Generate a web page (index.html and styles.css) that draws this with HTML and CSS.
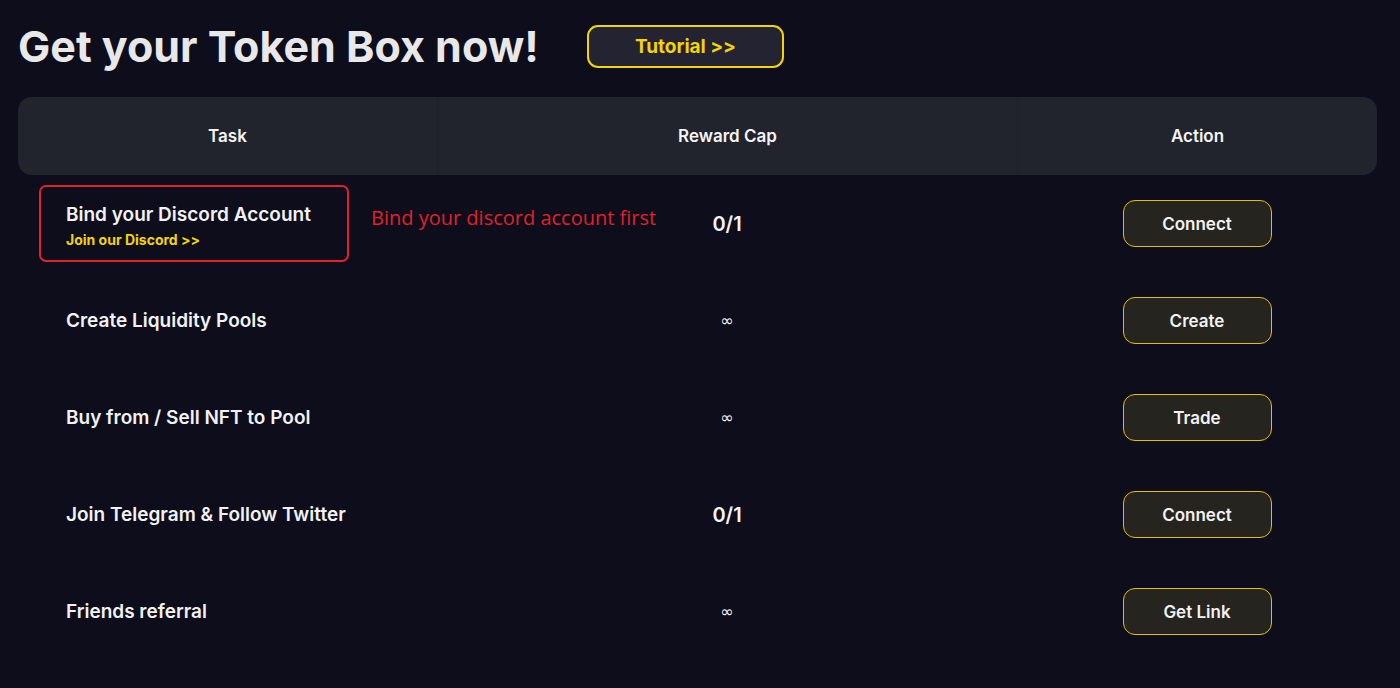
FILE: index.html
```html
<!DOCTYPE html>
<html lang="en">
<head>
<meta charset="utf-8">
<title>Get your Token Box now!</title>
<link rel="stylesheet" href="styles.css">
</head>
<body>
<div class="page">
  <div class="top">
    <h1 class="title">Get your Token Box now!</h1>
    <button class="tutorial">Tutorial &gt;&gt;</button>
  </div>
  <div class="table">
    <div class="head">
      <div class="hcell">Task</div>
      <div class="hcell">Reward Cap</div>
      <div class="hcell">Action</div>
    </div>
    <div class="row first">
      <div class="task">
        <div class="highlight">
          <div class="task-name">Bind your Discord Account</div>
          <div class="task-link">Join our Discord &gt;&gt;</div>
        </div>
        <div class="note">Bind your discord account first</div>
      </div>
      <div class="cap">0/1</div>
      <div class="action"><button class="btn">Connect</button></div>
    </div>
    <div class="row">
      <div class="task"><div class="task-name">Create Liquidity Pools</div></div>
      <div class="cap inf">∞</div>
      <div class="action"><button class="btn">Create</button></div>
    </div>
    <div class="row">
      <div class="task"><div class="task-name">Buy from / Sell NFT to Pool</div></div>
      <div class="cap inf">∞</div>
      <div class="action"><button class="btn">Trade</button></div>
    </div>
    <div class="row">
      <div class="task"><div class="task-name">Join Telegram &amp; Follow Twitter</div></div>
      <div class="cap">0/1</div>
      <div class="action"><button class="btn">Connect</button></div>
    </div>
    <div class="row">
      <div class="task"><div class="task-name">Friends referral</div></div>
      <div class="cap inf">∞</div>
      <div class="action"><button class="btn">Get Link</button></div>
    </div>
  </div>
</div>
</body>
</html>
```
FILE: styles.css
```css
* { box-sizing: border-box; }
html, body {
  margin: 0;
  padding: 0;
  background: #0d0d1b;
  height: 100%;
  overflow: hidden;
}
body {
  font-family: Inter, "Noto Sans", sans-serif;
  color: #f2f2f2;
}
.page {
  padding: 25px 23px 0 18px;
}
.top {
  display: flex;
  align-items: center;
  height: 42px;
  margin-bottom: 30px;
}
.title {
  margin: 0;
  font-family: Inter, sans-serif;
  font-size: 43px;
  font-weight: 700;
  color: #e8e8e8;
  width: 569px;
  line-height: 42px;
}
.tutorial {
  width: 197px;
  height: 43px;
  border: 2px solid #f3d500;
  border-radius: 11px;
  background: #232332;
  color: #f5d400;
  font-family: Inter, sans-serif;
  font-size: 19px;
  font-weight: 700;
  padding: 0;
}
.table {
  width: 1359px;
}
.head {
  display: grid;
  grid-template-columns: 419px 580px 360px;
  height: 78px;
  background: #21232d;
  border-radius: 14px;
}
.hcell {
  display: flex;
  align-items: center;
  justify-content: center;
  font-size: 17px;
  font-weight: 600;
  color: #f4f4f4;
}
.hcell + .hcell {
  border-left: 1px solid #1f212a;
}
.row {
  display: grid;
  grid-template-columns: 419px 580px 360px;
  height: 97px;
  align-items: center;
}
.task {
  position: relative;
  padding-left: 48px;
  height: 100%;
  display: flex;
  align-items: center;
}
.task-name {
  font-size: 19px;
  font-weight: 600;
  color: #f2f2f2;
}
.first .task {
  padding-left: 21px;
}
.highlight {
  width: 310px;
  height: 77px;
  border: 2px solid #e0222c;
  border-radius: 7px;
  padding: 16px 0 0 25px;
}
.task-link {
  margin-top: 5px;
  font-size: 14px;
  font-weight: 700;
  color: #f5d400;
}
.note {
  position: absolute;
  left: 353px;
  top: 29px;
  white-space: nowrap;
  font-family: "Open Sans", "Noto Sans", sans-serif;
  font-size: 20px;
  color: #e0202a;
}
.cap {
  text-align: center;
  font-size: 20px;
  font-weight: 600;
  color: #f4f4f4;
}
.cap.inf {
  font-size: 16px;
  font-weight: 400;
  font-family: "DejaVu Sans", sans-serif;
}
.action {
  display: flex;
  justify-content: center;
}
.btn {
  width: 149px;
  height: 47px;
  border: 1.5px solid #e3c000;
  border-radius: 12px;
  background: #26241e;
  color: #f2f2f2;
  font-family: Inter, sans-serif;
  font-size: 17px;
  font-weight: 600;
  padding: 0;
}
```
